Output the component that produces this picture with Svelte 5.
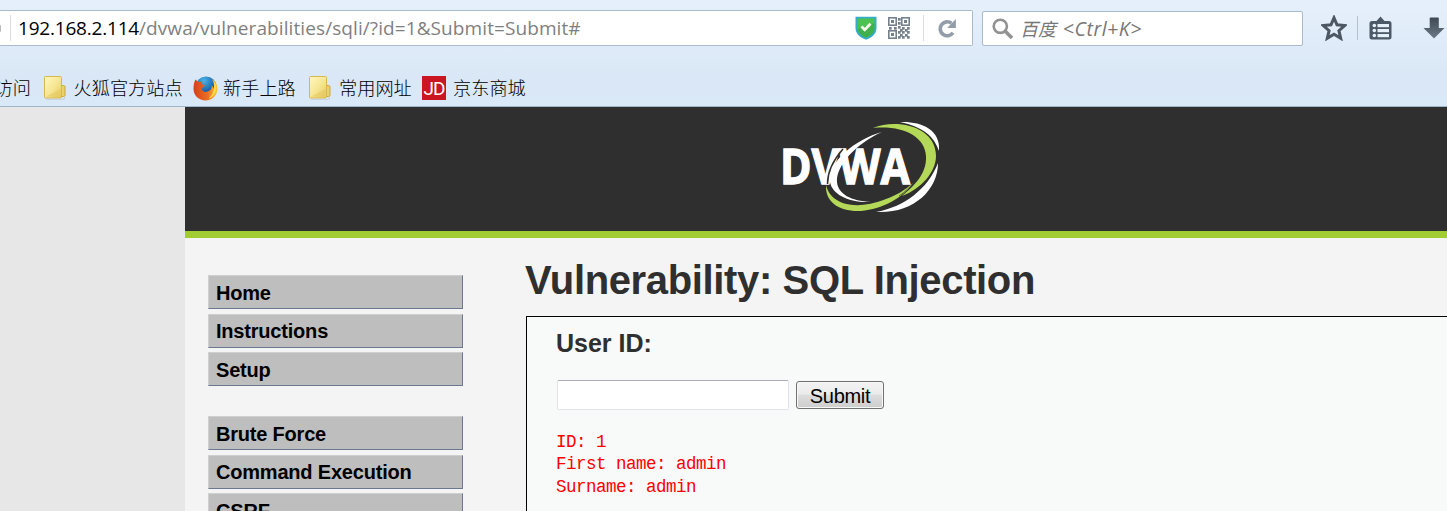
<script>
  const mainMenu = ['Home', 'Instructions', 'Setup'];
  const attackMenu = ['Brute Force', 'Command Execution', 'CSRF'];
  const result = ['ID: 1', 'First name: admin', 'Surname: admin'];

  // Finder corners and data modules of the QR button, in pixels of a 22 x 22 tile
  const qr = [[10,9],[10,1],[10,5],[1,10],[6,10],[14,10],[19,10],[12,12],[17,12],[10,14],[14,14],[19,14],[12,17],[17,17],[10,19],[14,19],[19,19]];
  const finders = [[0, 0], [13, 0], [0, 13]];
</script>

{#snippet folder()}
  <svg class="folder" width="24" height="26" viewBox="0 0 24 26">
    <defs>
      <linearGradient id="fold" x1="0" y1="0" x2="1" y2="1">
        <stop offset="0" stop-color="#fff8bd" />
        <stop offset=".5" stop-color="#f7e795" />
        <stop offset="1" stop-color="#e6c85c" />
      </linearGradient>
    </defs>
    <path d="M3 24h17l2-2v1.500l-2 1H3z" fill="#8e9cab" opacity=".5" />
    <rect x="17.500" y="10.500" width="4.500" height="11" rx="1.500" fill="#ead170" stroke="#cda63c" />
    <rect x="1.500" y="1.500" width="17" height="21.500" rx="1" fill="url(#fold)" stroke="#d8b84e" />
    <path d="M3 21.500L17.500 14v8z" fill="#e2c458" opacity=".45" />
  </svg>
{/snippet}

<div class="window">
  <div class="chrome">
    <div class="nav">
      <div class="url">
        <span class="knob"></span>
        <span class="sep"></span>
        <span class="address"><b>192.168.2.114</b><i>/dvwa/vulnerabilities/sqli/?id=1&amp;Submit=Submit#</i></span>
        <svg class="shield" width="22" height="24" viewBox="0 0 22 24">
          <path d="M.5.8h21v11c0 6-4 9.500-10.500 12C4.500 21.300.5 17.800.5 11.800z" fill="#36abc8" />
          <path d="M2.500 2.500h17v9c0 5-3 7.900-8.500 10.100C5.500 19.400 2.500 16.500 2.500 11.500z" fill="#4cc351" />
          <path d="M2.500 13L19.500 7v4.500c0 5-3 7.900-8.500 10.100-4.500-1.800-7.600-4-8.500-8.600z" fill="#37a446" opacity=".6" />
          <path d="M6.500 10.500l3.200 3.200 5.800-6" fill="none" stroke="#f4fbe9" stroke-width="2.800" />
        </svg>
        <svg class="qr" width="22" height="22" viewBox="0 0 22 22" fill="#76818e">
          {#each finders as [x, y]}
            <rect x={x + 0.8} y={y + 0.8} width="7.400" height="7.400" fill="none" stroke="#76818e" stroke-width="1.600" />
            <rect x={x + 3} y={y + 3} width="3" height="3" />
          {/each}
          {#each qr as [x, y]}<rect {x} {y} width="2.700" height="2.700" />{/each}
        </svg>
        <span class="sep wide"></span>
        <svg class="reload" width="20" height="20" viewBox="0 0 20 20">
          <path d="M13.500 5.200A7 7 0 1 0 15 14.800" fill="none" stroke="#929da9" stroke-width="3.600" />
          <path d="M17.900 1v9H9.200z" fill="#929da9" />
        </svg>
      </div>
      <div class="search">
        <svg width="22" height="22" viewBox="0 0 22 22" fill="none" stroke="#929292">
          <circle cx="8.300" cy="8.300" r="6.600" stroke-width="2.600" />
          <path d="M12.800 12.800L20 20" stroke-width="3.600" />
        </svg>
        <span class="hint">百度 <em>&lt;Ctrl+K&gt;</em></span>
      </div>
      <svg class="star" width="26" height="26" viewBox="0 0 26 26">
        <path d="M13 2.800l3 7 7.700.700-5.800 5.200 1.800 7.600L13 19.300l-6.700 4 1.800-7.600-5.800-5.200 7.700-.700z" fill="none" stroke="#4c5763" stroke-width="3" />
      </svg>
      <span class="toolsep"></span>
      <svg class="list" width="23" height="25" viewBox="0 0 23 25">
        <path d="M3 5h4.500l4-4.500 4 4.500H20a2.500 2.500 0 0 1 2.500 2.500V21a2.500 2.500 0 0 1-2.500 2.500H3A2.500 2.500 0 0 1 .5 21V7.500A2.500 2.500 0 0 1 3 5z" fill="#4c5865" />
        <g fill="#e5effa">
          <rect x="3.500" y="7.700" width="3.600" height="3.600" rx="1.700" /><rect x="8.500" y="8" width="11.500" height="3.200" />
          <rect x="3.500" y="12.700" width="3.600" height="3.600" rx="1.700" /><rect x="8.500" y="13" width="11.500" height="3.200" />
          <rect x="3.500" y="17.700" width="3.600" height="3.600" rx="1.700" /><rect x="8.500" y="18" width="11.500" height="3.200" />
        </g>
      </svg>
      <svg class="down" width="22" height="22" viewBox="0 0 22 22">
        <defs><linearGradient id="dn" x2="0" y2="1"><stop stop-color="#3e4853" /><stop offset="1" stop-color="#6c7a88" /></linearGradient></defs>
        <path d="M7.500.5h7.500q.8 0 .8.800V11H21.500L11 21.500.5 11H6.700V1.300q0-.8.8-.8z" fill="url(#dn)" />
      </svg>
    </div>
    <div class="bookmarks">
      <span class="first">访问</span>
      {@render folder()}<span class="bm b1">火狐官方站点</span>
      <svg class="fox" width="25" height="25" viewBox="0 0 25 25">
        <defs>
          <radialGradient id="globe" cx=".4" cy=".2" r=".8"><stop stop-color="#49b5e8" /><stop offset=".6" stop-color="#1c67b1" /><stop offset="1" stop-color="#123b7c" /></radialGradient>
          <linearGradient id="fur" x1="0" x2="1"><stop stop-color="#d5411d" /><stop offset=".6" stop-color="#ea7021" /><stop offset="1" stop-color="#fbc63b" /></linearGradient>
        </defs>
        <circle cx="13" cy="11" r="10.500" fill="url(#globe)" />
        <path d="M2.500 3.500L5.500 6 9.300 5.300 8.500 8 12 9.500 8.500 12.500C9 16 13 17 15.500 15c2.500-.5 3.500-3 3-5.500 1.500 1 2 2 2 3.500C22 9 20.500 5.500 18.500 3c4 2 6.200 6 6 10.500C24 20 18.500 24.500 12.500 24.500 6 24.500.5 19.500.5 13 .5 9.500 1 6 2.500 3.500z" fill="url(#fur)" />
        <path d="M20.500 5c3 3 3.500 7 2 11-1 3-4 6-7 6.500 5-4 6.500-10 5-17.500z" fill="#ffd94d" />
      </svg>
      <span class="bm b2">新手上路</span>
      {@render folder()}<span class="bm b3">常用网址</span>
      <span class="jd">JD</span><span class="bm b4">京东商城</span>
    </div>
  </div>

  <div class="site">
    <div class="header">
      <svg class="logo" width="180" height="124" viewBox="0 -3 180 124">
        <text x="10" y="73.500" textLength="130" lengthAdjust="spacingAndGlyphs">DVWA</text>
        <g transform="translate(0 12)">
          <path d="M73 27C65 36 57.500 49 57.500 62" fill="none" stroke="#303030" stroke-width="1.500" />
          <path d="M112 10C86 17 57 40 60 60c2 12 18 21 41 20-20-1-33-8-34-20C66 44 85 22 112 10z" fill="#fff" />
          <path d="M130 0C150-1 171 7 169 29 164 14 153 5 130 0z" fill="#fff" />
          <path d="M168 41c0 28-26 51-62 49 28-5 52-23 62-49z" fill="#fff" />
          <path d="M103 6c23-10 63-2 63 28 0 16-15 33-34 40 9-8 25-20 24-40C155 14 132 3 103 6z" fill="#b4d857" />
          <path d="M56 63c4 18 27 27 60 14 11-4 19-9 27-16-10 15-31 26-52 28-22 1-36-9-35-26z" fill="#b4d857" />
          <path d="M129 74C141 66 150 54 154 44" fill="none" stroke="#303030" stroke-width=".7" />
        </g>
      </svg>
    </div>
    <div class="body">
      <div class="menu">
        <ul>{#each mainMenu as item}<li>{item}</li>{/each}</ul>
        <ul>{#each attackMenu as item}<li>{item}</li>{/each}</ul>
      </div>
      <div class="main">
        <h1><span>Vulnerability: SQL Injection</span></h1>
        <div class="panel">
          <h3>User ID:</h3>
          <div class="form">
            <input type="text" aria-label="User ID" />
            <button>Submit</button>
          </div>
          <pre>{#each result as line}<span>{line}</span>{/each}</pre>
        </div>
      </div>
    </div>
  </div>
</div>

<style>
  :global(body) { overflow: hidden; background: #e7e7e7; }
  .window { box-sizing: border-box; width: 1447px; height: 511px; overflow: hidden; font-family: "Liberation Sans", sans-serif; }
  .window svg { flex: none; display: block; }
  .chrome { box-sizing: border-box; height: 107px; border-bottom: 1px solid #a1b5cb; background: linear-gradient(#e6f0fb, #d9e7f6 75%, #dae9f8); overflow: hidden; }
  .nav { display: flex; align-items: center; height: 36px; padding-top: 10px; }
  .url { box-sizing: border-box; display: flex; align-items: center; flex: none; width: 973px; height: 36px; border: 1px solid #a9bacb; border-left: 0; border-radius: 0 2px 2px 0; background: #fff; }
  .knob { width: 1px; height: 7px; border-radius: 0 3px 3px 0; background: #bbb; }
  .sep { flex: none; width: 1px; height: 26px; margin-left: 9px; background: #dcdcdc; }
  .address { display: block; flex: none; width: 837px; margin-left: 7px; font: 19px/34px "Open Sans", sans-serif; white-space: nowrap; }
  .address b { font-weight: 400; color: #000; letter-spacing: -.2px; }
  .address i { font-style: normal; color: #7f7f7f; letter-spacing: .09px; }
  .qr { margin-left: 11px; }
  .sep.wide { margin-left: 13px; }
  .reload { margin-left: 14px; }
  .search { box-sizing: border-box; display: flex; align-items: center; flex: none; width: 321px; height: 35px; margin: 1px 0 0 9px; padding-left: 9px; border: 1px solid #a9bacb; border-radius: 2px; background: #fff; }
  .hint { margin-left: 6px; font: italic 18px/32px "Open Sans", "Noto Sans CJK SC", sans-serif; color: #777; white-space: nowrap; }
  .hint em { margin-left: 2px; font-size: 19.500px; letter-spacing: .55px; }
  .star { margin-left: 18px; }
  .toolsep { width: 1px; height: 24px; margin-left: 10px; background: #b1c1d1; }
  .list { margin-left: 11px; }
  .down { margin-left: 31px; }
  .bookmarks { display: flex; align-items: center; height: 26px; margin-top: 29px; font: 300 18.200px/26px "Noto Sans CJK SC", sans-serif; color: #000; white-space: nowrap; }
  .first { display: flex; justify-content: flex-end; flex: none; width: 31px; height: 26px; margin-right: 12px; line-height: 24px; }
  .bm { flex: none; margin-left: 7px; line-height: 24px; height: 26px; }
  .b1 { width: 119px; margin-left: 6.500px; margin-right: .5px; }
  .b2 { width: 85px; margin-left: 5px; }
  .b3 { width: 83px; }
  .jd { flex: none; width: 24px; height: 24px; background: #cb1520; color: #fff; font: 19px/25px Roboto, sans-serif; letter-spacing: -1px; text-align: center; }
  .site { width: 1262px; height: 404px; margin-left: 185px; background: #f4f4f4; }
  .header { height: 124px; border-bottom: 7px solid #a2cd32; background: #2f2f2f; }
  .logo { margin-left: 585px; overflow: visible; }
  .logo text { font: 700 49px "Open Sans", sans-serif; fill: #fff; stroke: #fff; stroke-width: 1.300px; }
  .body { display: flex; height: 273px; overflow: hidden; }
  .menu { flex: none; width: 255px; padding: 37px 0 0 23px; }
  .menu ul { display: flex; flex-direction: column; gap: 4.500px; margin: 0 0 30px; padding: 0; list-style: none; }
  .menu li { box-sizing: border-box; flex: none; height: 34px; padding-left: 7px; border: 1px solid #cfcfcf; border-right-color: #6b7890; border-bottom-color: #6b7890; background: #bebebe; color: #000; font-size: 20px; font-weight: 700; line-height: 34px; letter-spacing: -.2px; }
  .menu li:nth-child(2) { line-height: 32px; }
  .main { flex: none; width: 922px; margin-left: 62px; }
  h1 { margin: 0; height: 78px; color: #2f2f2f; font-size: 40px; line-height: 84px; letter-spacing: -.36px; white-space: nowrap; }
  .panel { box-sizing: border-box; width: 940px; height: 240px; margin-left: 1px; padding: 12px 0 0 30px; border: 1px solid #000; background: #f8faf9; }
  h3 { margin: 0 0 0 -1px; color: #2f2f2f; font-size: 25px; line-height: 28px; }
  .form { display: flex; align-items: center; gap: 7px; margin-top: 23px; }
  input { box-sizing: border-box; width: 232px; height: 30px; margin: 0; border: 1px solid #e2e3ea; border-top-color: #abadb3; border-radius: 2px; background: #fff; }
  button { box-sizing: border-box; width: 88px; height: 28px; padding: 2px 0 0; border: 1px solid #707070; border-radius: 3px; background: linear-gradient(#f3f3f3, #ebebeb 47%, #dddddd 50%, #cdcdcd); box-shadow: inset 0 0 0 1px #f8f8f8; color: #000; font: 20px/24px "Liberation Sans", sans-serif; letter-spacing: -.3px; }
  pre { display: flex; flex-direction: column; margin: 20.500px 0 0 -1px; color: #f00; font: 17.500px/22.700px "Liberation Mono", monospace; letter-spacing: -.5px; }
</style>
